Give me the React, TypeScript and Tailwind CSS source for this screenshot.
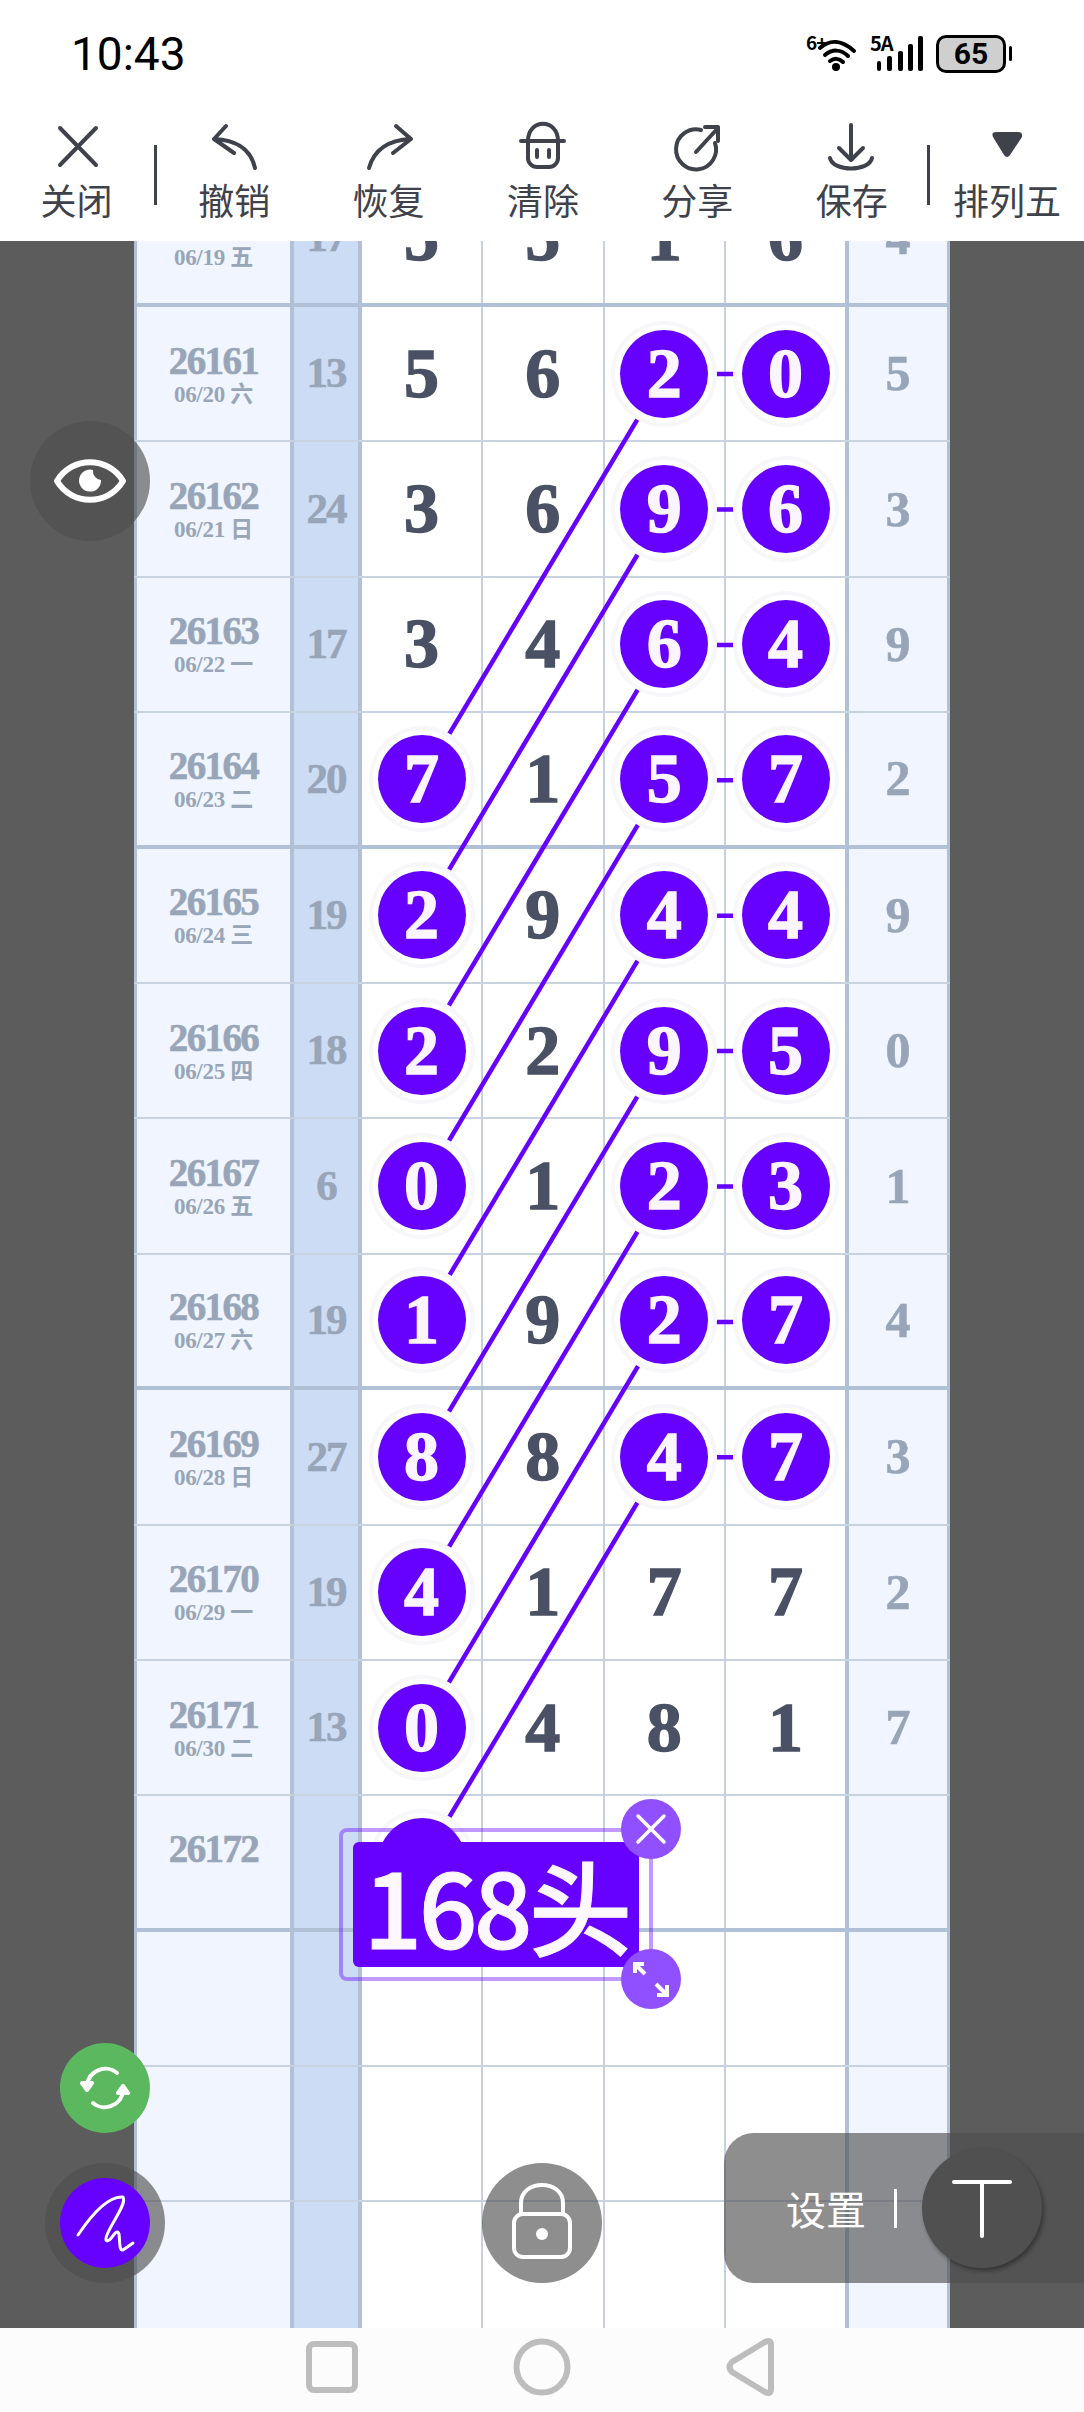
import React from "react";

type Row = { no?: string; date?: string; sum?: string; nums?: string[]; extra?: string; hl?: number[]; link?: boolean };

const rows: Row[] = [
  { no: "26160", date: "06/19 五", sum: "17", nums: ["5", "5", "1", "6"], extra: "4" },
  { no: "26161", date: "06/20 六", sum: "13", nums: ["5", "6", "2", "0"], extra: "5", hl: [2, 3] },
  { no: "26162", date: "06/21 日", sum: "24", nums: ["3", "6", "9", "6"], extra: "3", hl: [2, 3] },
  { no: "26163", date: "06/22 一", sum: "17", nums: ["3", "4", "6", "4"], extra: "9", hl: [2, 3] },
  { no: "26164", date: "06/23 二", sum: "20", nums: ["7", "1", "5", "7"], extra: "2", hl: [0, 2, 3] },
  { no: "26165", date: "06/24 三", sum: "19", nums: ["2", "9", "4", "4"], extra: "9", hl: [0, 2, 3] },
  { no: "26166", date: "06/25 四", sum: "18", nums: ["2", "2", "9", "5"], extra: "0", hl: [0, 2, 3] },
  { no: "26167", date: "06/26 五", sum: "6", nums: ["0", "1", "2", "3"], extra: "1", hl: [0, 2, 3] },
  { no: "26168", date: "06/27 六", sum: "19", nums: ["1", "9", "2", "7"], extra: "4", hl: [0, 2, 3] },
  { no: "26169", date: "06/28 日", sum: "27", nums: ["8", "8", "4", "7"], extra: "3", hl: [0, 2, 3] },
  { no: "26170", date: "06/29 一", sum: "19", nums: ["4", "1", "7", "7"], extra: "2", hl: [0] },
  { no: "26171", date: "06/30 二", sum: "13", nums: ["0", "4", "8", "1"], extra: "7", hl: [0] },
  { no: "26172", nums: ["", "", "", ""], hl: [0] },
  { nums: ["", "", "", ""] },
  { nums: ["", "", "", ""] },
  { nums: ["", "", "", ""] },
];

const ROW_H = 135.4;
const colX = [287.5, 409, 530.5, 651.5];
const numW = ["w-[121px]", "w-[121.5px]", "w-[121.5px]", "w-[123px]"];

function Lines() {
  const items: React.ReactNode[] = [];
  rows.forEach((r, i) => {
    const y = ROW_H * i + ROW_H / 2 - 1;
    if (r.hl?.includes(2) && r.hl?.includes(3)) {
      items.push(<line key={`h${i}`} x1={colX[2]} y1={y} x2={colX[3]} y2={y} />);
      items.push(<line key={`d${i}`} x1={colX[2]} y1={y} x2={colX[0]} y2={y + ROW_H * 3} />);
    }
  });
  return (
    <svg className="absolute left-0 top-0 w-[816px] h-[2166px]" viewBox="0 0 816 2166" fill="none" stroke="#6600ff" strokeWidth={4.5}>
      {items}
    </svg>
  );
}

function Ball({ v }: { v: string }) {
  return (
    <div className="relative z-10 w-[88px] h-[88px] rounded-full bg-[#6600ff] flex items-center justify-center text-[#faf5ff] [-webkit-text-stroke:1.5px_#faf5ff] shadow-[0_0_0_5px_#ffffff,0_0_0_9px_#f7f7f9]">
      {v}
    </div>
  );
}

function TableRow({ r, idx }: { r: Row; idx: number }) {
  const thick = idx % 4 === 0;
  return (
    <div className={`flex h-[135.4px] ${thick ? "border-b-4 border-[#b0c0d6]" : "border-b-2 border-[#c8d3e2]"}`}>
      <div className="w-[156px] bg-[#f0f5ff] border-l-[3px] border-[#b0c0d6] flex flex-col items-center justify-center text-[#98a5b8]">
        <div className="text-[39px] leading-[42px] font-bold tracking-[-1.6px] [-webkit-text-stroke:0.6px_#98a5b8]">{r.no ?? "\u00a0"}</div>
        <div className="text-[23px] leading-[26px] font-bold tracking-[-0.3px]">{r.date ?? "\u00a0"}</div>
      </div>
      <div className="w-[72px] bg-[#ccdcf4] border-x-4 border-[#b0c0d6] flex items-center justify-center text-[43px] font-bold tracking-[-2px] text-[#98a5b8] [-webkit-text-stroke:0.6px_#98a5b8]">
        {r.sum}
      </div>
      {r.nums?.map((n, i) => (
        <div
          key={i}
          className={`${numW[i]} bg-white flex items-center justify-center text-[70px] leading-none font-bold text-[#4a5164] [-webkit-text-stroke:1.5px_#4a5164] ${i === 3 ? "border-r-4 border-[#b0c0d6]" : "border-r-2 border-[#c5d0e0]"}`}
        >
          {r.hl?.includes(i) ? <Ball v={n} /> : n}
        </div>
      ))}
      <div className="w-[101px] bg-[#f0f5ff] border-r-[3px] border-[#b0c0d6] flex items-center justify-center text-[50px] font-bold text-[#98a5b8] [-webkit-text-stroke:0.6px_#98a5b8]">
        {r.extra}
      </div>
    </div>
  );
}

function ToolItem({ label, box, children }: { label: string; box: string; children: React.ReactNode }) {
  return (
    <div className="w-[154.4px] flex flex-col items-center pt-[8px]">
      <svg width="60" height="60" viewBox={box} fill="none" stroke="#3f424a" strokeWidth={4} strokeLinecap="round" strokeLinejoin="round">
        {children}
      </svg>
      <div className="mt-[3px] text-[36px] leading-[42px] text-[#3f424a] whitespace-nowrap">{label}</div>
    </div>
  );
}

function StatusIcons() {
  return (
    <div className="flex items-center gap-[12px] h-[44px]">
      <div className="relative w-[52px] h-[40px]">
        <span className="absolute left-0 top-[-2px] text-[19px] leading-[20px] font-bold tracking-[-1px] text-black">6+</span>
        <svg className="absolute left-0 top-0" width="52" height="40" viewBox="0 0 52 40" fill="none" stroke="#000" strokeWidth={4} strokeLinecap="round">
          <path d="M14 14 C 24 5, 36 6, 48 17" />
          <path d="M19 21 C 26 15, 35 15, 42 22" />
          <path d="M24 27 C 28 24, 33 24, 37 28" />
          <circle cx="30" cy="33" r="4" fill="#000" stroke="none" />
        </svg>
      </div>
      <div className="relative w-[54px] h-[40px]">
        <span className="absolute left-0 top-[-1px] text-[20px] leading-[20px] font-bold tracking-[-1px] text-black">5A</span>
        <svg className="absolute left-0 top-0" width="54" height="40" viewBox="0 0 54 40" fill="#000">
          <rect x="7" y="27" width="4" height="10" rx="2" />
          <rect x="17" y="22" width="5" height="15" rx="2" />
          <rect x="28" y="17" width="5" height="20" rx="2" />
          <rect x="38" y="10" width="5" height="27" rx="2" />
          <rect x="48" y="2" width="5" height="35" rx="2" />
        </svg>
      </div>
      <div className="flex items-center">
        <div className="w-[70px] h-[38px] rounded-[10px] border-[3px] border-black bg-[#cfcfcf] flex items-center justify-center text-[30px] leading-none font-bold text-black font-['Roboto',sans-serif]">
          65
        </div>
        <div className="ml-[3px] w-[3px] h-[15px] rounded-full bg-black" />
      </div>
    </div>
  );
}

export default function App() {
  return (
    <div className="relative w-[1084px] h-[2412px] flex flex-col overflow-hidden bg-[#5c5c5c] font-['Noto_Sans_CJK_SC',sans-serif]">
      {/* status + toolbar */}
      <div className="relative z-20 h-[241px] bg-white">
        <div className="h-[107px] pl-[71px] pr-[72px] flex items-center justify-between">
          <div className="text-[46px] leading-none text-black font-['Roboto',sans-serif]">10:43</div>
          <StatusIcons />
        </div>
        <div className="flex h-[134px]">
          <div className="w-[153px] flex flex-col items-center pt-[8px]">
            <svg width="60" height="60" viewBox="46 115 60 60" fill="none" stroke="#3f424a" strokeWidth={4} strokeLinecap="round">
              <path d="M59 128 L95 165 M95 128 L59 165" />
            </svg>
            <div className="mt-[3px] text-[36px] leading-[42px] text-[#3f424a]">关闭</div>
          </div>
          <div className="mt-[38px] ml-[1px] w-[3px] h-[60px] bg-[#3f424a]" />
          <ToolItem label="撤销" box="203 115 60 60">
            <path d="M225 126 L213 139 L233 153 M213 139 C 236 140, 250 150, 254 168" />
          </ToolItem>
          <ToolItem label="恢复" box="357 115 60 60">
            <path d="M394 126 L409 139 L391 153 M409 139 C 386 140, 372 150, 367 168" />
          </ToolItem>
          <ToolItem label="清除" box="513 115 60 60">
            <path d="M521 141 H564 M528 141 C 528 118, 558 118, 558 141" />
            <path d="M528 141 V158 A9 9 0 0 0 537 167 H549 A9 9 0 0 0 558 158 V141" />
            <path d="M537 150 V157 M549 150 V157" />
          </ToolItem>
          <ToolItem label="分享" box="666 115 60 60">
            <path d="M700 130 A20 20 0 1 0 714 143" />
            <path d="M695 152 L717 128 M704 127 H717 V141" />
          </ToolItem>
          <ToolItem label="保存" box="821 115 60 60">
            <path d="M850 125 V159 M838 148 L850 160 L862 148" />
            <path d="M829 158 C 832 172, 868 172, 871 158" />
          </ToolItem>
          <div className="mt-[38px] -ml-[1.5px] w-[3px] h-[60px] bg-[#3f424a]" />
          <div className="w-[153px] flex flex-col items-center pt-[8px]">
            <svg width="60" height="60" viewBox="977 115 60 60">
              <path d="M996 132 H1018 Q1023 132 1022 137 L1010 155 Q1007 159 1004 155 L993 137 Q991 132 996 132 Z" fill="#3f424a" />
            </svg>
            <div className="mt-[3px] text-[36px] leading-[42px] text-[#3f424a] whitespace-nowrap">排列五</div>
          </div>
        </div>
      </div>

      {/* table */}
      <div className="flex-1 min-h-0 overflow-hidden">
        <div className="relative w-[816px] mx-auto -mt-[69.4px] font-['Liberation_Serif','Noto_Sans_CJK_SC',serif]">
          {rows.map((r, i) => (
            <TableRow key={i} r={r} idx={i} />
          ))}
          <Lines />
        </div>
      </div>

      {/* bottom nav */}
      <div className="relative z-20 h-[84px] bg-[#fcfcfc] flex justify-center">
        <svg width="1084" height="84" viewBox="0 2328 1084 84" fill="none" stroke="#bdbdbd" strokeWidth={6}>
          <rect x="309" y="2344" width="46" height="46" rx="5" />
          <circle cx="542" cy="2367" r="25.5" />
          <path d="M771 2345 Q771 2339 765 2342 L732 2362 Q727 2367 732 2372 L765 2392 Q771 2395 771 2389 Z" strokeLinejoin="round" />
        </svg>
      </div>

      {/* eye */}
      <div className="absolute z-30 left-[30px] top-[421px] w-[120px] h-[120px] rounded-full bg-[#4e4e4ea3] flex items-center justify-center">
        <svg width="76" height="56" viewBox="0 0 76 56" fill="none">
          <path d="M5 28 C 20 3, 56 3, 71 28 C 56 53, 20 53, 5 28 Z" stroke="#fff" strokeWidth={6} strokeLinejoin="round" />
          <path d="M41 17 A11 11 0 1 0 49 27 A9 9 0 0 1 41 17 Z" fill="#fff" />
        </svg>
      </div>

      {/* 168 label */}
      <div className="absolute z-30 left-[339px] top-[1828px] w-[314px] h-[153px] rounded-[8px] border-4 border-[#6600ff66]" />
      <div className="absolute z-30 left-[353px] top-[1842px] w-[286px] h-[125px] rounded-[6px] bg-[#6600ff] flex items-center justify-center text-[103px] leading-none font-medium tracking-[-3.5px] text-[#fdf7ff] [-webkit-text-stroke:1px_#fdf7ff] whitespace-nowrap">
        168头
      </div>
      <div className="absolute z-30 left-[621px] top-[1799px] w-[60px] h-[60px] rounded-full bg-[#9050ff] flex items-center justify-center">
        <svg width="36" height="36" viewBox="0 0 36 36" stroke="#fff" strokeWidth={3.5} strokeLinecap="round">
          <path d="M5 5 L31 31 M31 5 L5 31" />
        </svg>
      </div>
      <div className="absolute z-30 left-[621px] top-[1949px] w-[60px] h-[60px] rounded-full bg-[#9050ff] flex items-center justify-center">
        <svg width="44" height="44" viewBox="0 0 44 44" fill="none" stroke="#fff" strokeWidth={4}>
          <path d="M6 7 L16 17 M6 16 V7 H15 M27 27 L38 38 M38 28 V38 H28" />
        </svg>
      </div>

      {/* floating buttons */}
      <div className="absolute z-30 left-[60px] top-[2043px] w-[90px] h-[90px] rounded-full bg-[#5cb85f] flex items-center justify-center">
        <svg width="52" height="52" viewBox="0 0 52 52" fill="none" stroke="#fff" strokeWidth={4} strokeLinecap="round" strokeLinejoin="round">
          <path d="M8 24 C 9 8, 28 2, 38 11" />
          <path d="M44 28 C 43 44, 24 50, 14 41" />
          <path d="M3 21 L8 28 L13 21 Z M39 31 L44 24 L49 31 Z" fill="#fff" />
        </svg>
      </div>
      <div className="absolute z-30 left-[45px] top-[2163px] w-[120px] h-[120px] rounded-full bg-[#4e4e4ea3] flex items-center justify-center">
        <div className="w-[90px] h-[90px] rounded-full bg-[#6600ff] flex items-center justify-center">
          <svg width="90" height="90" viewBox="60 2178 90 90" fill="none" stroke="#fff" strokeWidth={3} strokeLinecap="round" strokeLinejoin="round">
            <path d="M78 2235 C 92 2214, 108 2196, 123 2197 C 128 2205, 104 2232, 106 2240 C 110 2245, 116 2226, 119 2234 C 120 2242, 119 2251, 123 2250 L133 2243" />
          </svg>
        </div>
      </div>
      <div className="absolute z-30 left-[482px] top-[2163px] w-[120px] h-[120px] rounded-full bg-[#4e4e4ea3] flex items-center justify-center">
        <svg width="64" height="84" viewBox="0 0 64 84" fill="none" stroke="#fff" strokeWidth={4}>
          <path d="M11 34 V22 C 11 -2, 53 -2, 53 22 V34" />
          <rect x="4" y="33" width="56" height="43" rx="9" />
          <ellipse cx="32" cy="53" rx="6" ry="6" fill="#fff" stroke="none" />
        </svg>
      </div>

      {/* settings pill */}
      <div className="absolute z-30 left-[724px] top-[2133px] w-[360px] h-[150px] rounded-l-[30px] bg-[#4e4e4ea3] flex items-center pl-[62px]">
        <span className="text-[40px] leading-none text-white whitespace-nowrap">设置</span>
        <div className="ml-[28px] w-[3px] h-[39px] bg-white" />
        <div className="ml-[25px] w-[120px] h-[120px] rounded-full bg-[#505050] shadow-[2px_3px_4px_rgba(0,0,0,0.35)] flex items-center justify-center">
          <svg width="64" height="64" viewBox="0 0 64 64" stroke="#fff" strokeWidth={4} strokeLinecap="round">
            <path d="M4 6 H60 M32 6 V60" />
          </svg>
        </div>
      </div>
    </div>
  );
}
